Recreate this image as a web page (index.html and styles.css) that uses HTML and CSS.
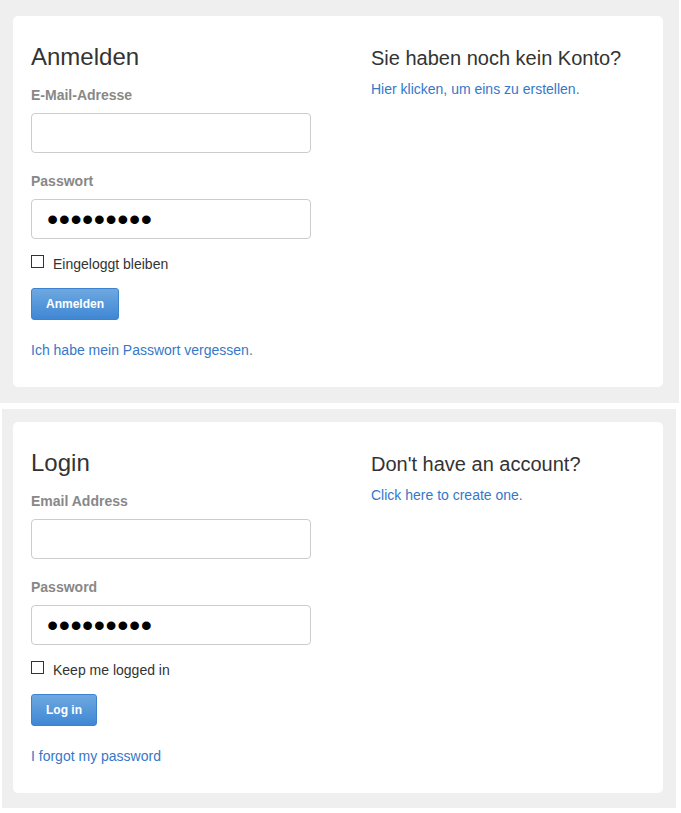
FILE: index.html
```html
<!DOCTYPE html>
<html lang="de">
<head>
<meta charset="utf-8">
<title>Anmelden / Login</title>
<link rel="stylesheet" href="styles.css">
</head>
<body>
<div class="panel panel-de">
  <div class="card">
    <div class="col-left">
      <h1 class="title">Anmelden</h1>
      <label class="label" for="email-de">E-Mail-Adresse</label>
      <input class="field" id="email-de" type="text">
      <label class="label label-gap" for="pw-de">Passwort</label>
      <input class="field field-pw" id="pw-de" type="password" value="123456789">
      <label class="check-row"><input class="check" type="checkbox"><span>Eingeloggt bleiben</span></label>
      <button class="btn" type="button">Anmelden</button>
      <a class="link forgot" href="#">Ich habe mein Passwort vergessen.</a>
    </div>
    <div class="col-right">
      <h2 class="subtitle">Sie haben noch kein Konto?</h2>
      <a class="link" href="#">Hier klicken, um eins zu erstellen.</a>
    </div>
  </div>
</div>
<div class="panel panel-en">
  <div class="card">
    <div class="col-left">
      <h1 class="title">Login</h1>
      <label class="label" for="email-en">Email Address</label>
      <input class="field" id="email-en" type="text">
      <label class="label label-gap" for="pw-en">Password</label>
      <input class="field field-pw" id="pw-en" type="password" value="123456789">
      <label class="check-row"><input class="check" type="checkbox"><span>Keep me logged in</span></label>
      <button class="btn" type="button">Log in</button>
      <a class="link forgot" href="#">I forgot my password</a>
    </div>
    <div class="col-right">
      <h2 class="subtitle">Don't have an account?</h2>
      <a class="link" href="#">Click here to create one.</a>
    </div>
  </div>
</div>
</body>
</html>
```

FILE: styles.css
```css
* { box-sizing: border-box; }
html, body {
  margin: 0;
  padding: 0;
  background: #ffffff;
}
body {
  font-family: "Liberation Sans", Arial, sans-serif;
  font-size: 14px;
  color: #333333;
  width: 681px;
}
.panel {
  background: #efefef;
}
.panel-de {
  width: 679px;
  padding: 16px 16px 16px 13px;
}
.panel-en {
  width: 674px;
  margin: 6px 0 0 2px;
  padding: 13px 13px 15px 11px;
}
.card {
  background: #ffffff;
  border-radius: 5px;
  padding: 27px 18px 27px 18px;
  display: grid;
  grid-template-columns: 340px 1fr;
}
.col-left {
  display: flex;
  flex-direction: column;
  align-items: flex-start;
}
.title {
  margin: 0;
  font-size: 24px;
  line-height: 28px;
  font-weight: normal;
  color: #333333;
}
.subtitle {
  margin: 1px 0 0 0;
  font-size: 20px;
  line-height: 28px;
  font-weight: normal;
  color: #333333;
}
.label {
  display: block;
  margin: 14px 0 8px 0;
  font-weight: bold;
  font-size: 14px;
  line-height: 20px;
  color: #888888;
}
.label-gap {
  margin-top: 18px;
}
.field {
  display: block;
  width: 280px;
  height: 40px;
  margin: 0;
  border: 1px solid #cccccc;
  border-radius: 4px;
  background: #ffffff;
  padding: 0 12px;
  font-family: "Liberation Sans", Arial, sans-serif;
  font-size: 14px;
  color: #000000;
  outline: none;
}
.field-pw {
  padding-left: 15px;
  font-size: 32px;
  letter-spacing: 0.5px;
}
.check-row {
  display: flex;
  align-items: flex-start;
  margin-top: 15px;
  line-height: 20px;
  font-size: 14px;
  color: #333333;
}
.check {
  appearance: none;
  -webkit-appearance: none;
  width: 13px;
  height: 13px;
  margin: 1px 9px 0 0;
  border: 1px solid #333333;
  border-radius: 0;
  background: #ffffff;
}
.btn {
  margin-top: 14px;
  height: 32px;
  padding: 0 14px;
  border: 1px solid #3c82cf;
  border-radius: 3px;
  background: linear-gradient(to bottom, #6ea8e0 0%, #3f87d4 100%);
  color: #ffffff;
  font-family: "Liberation Sans", Arial, sans-serif;
  font-weight: bold;
  font-size: 12px;
  line-height: 30px;
}
.link {
  color: #3578c8;
  text-decoration: none;
  font-size: 14px;
  line-height: 20px;
}
.forgot {
  margin-top: 20px;
}
.col-right {
  display: flex;
  flex-direction: column;
  align-items: flex-start;
}
.col-right .link {
  margin-top: 7px;
}
```
